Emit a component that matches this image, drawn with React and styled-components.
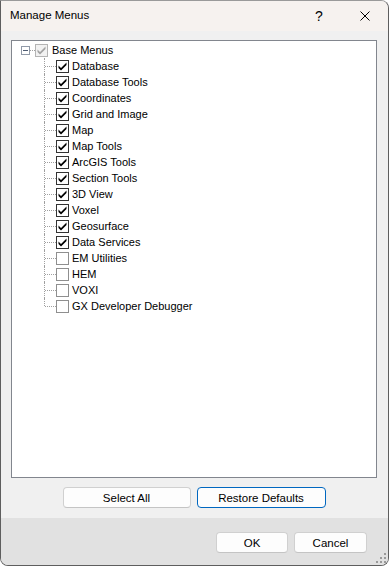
import styled, { createGlobalStyle } from "styled-components";

const Global = createGlobalStyle`
  html, body {
    margin: 0;
    padding: 0;
    background: #ffffff;
  }
  body {
    font-family: "Liberation Sans", Arial, sans-serif;
  }
`;

const Window = styled.div`
  width: 389px;
  height: 566px;
  box-sizing: border-box;
  border: 1px solid #5e5e5e;
  border-top-color: #9a9a9a;
  border-radius: 0 8px 8px 8px;
  background: #f0f0f0;
  display: flex;
  flex-direction: column;
  overflow: hidden;
  position: relative;
`;

const TitleBar = styled.div`
  height: 30px;
  background: #f6f2ef;
  display: flex;
  align-items: center;
  padding-left: 9px;
`;

const Title = styled.div`
  flex: 1;
  font-size: 11.5px;
  color: #000;
  padding-bottom: 2px;
`;

const CaptionButton = styled.div`
  width: 46px;
  height: 30px;
  display: flex;
  align-items: center;
  justify-content: center;
  font-size: 14px;
  color: #000;
`;

const Main = styled.div`
  flex: 1;
  display: flex;
  flex-direction: column;
  padding: 9px 11px 0 10px;
`;

const TreePanel = styled.div`
  height: 438px;
  box-sizing: border-box;
  border: 1px solid #82868e;
  background: #ffffff;
  padding-top: 1px;
`;

const Row = styled.div`
  height: 16px;
  display: flex;
  align-items: center;
  padding-left: ${(p) => p.$indent}px;
`;

const Expander = styled.div`
  width: 9px;
  height: 9px;
  box-sizing: border-box;
  border: 1px solid #919aa8;
  background: #fff;
  display: flex;
  align-items: center;
  justify-content: center;
  &::after {
    content: "";
    width: 5px;
    height: 1px;
    background: #4f5d73;
  }
`;

const Dash = styled.div`
  width: ${(p) => p.$w}px;
  height: 0;
  border-top: 1px dotted #a0a0a0;
`;

const Connector = styled.div`
  width: 12px;
  height: 16px;
  position: relative;
  flex-shrink: 0;
  &::before {
    content: "";
    position: absolute;
    left: 0;
    top: 0;
    height: ${(p) => (p.$last ? "8px" : "16px")};
    border-left: 1px dotted #a0a0a0;
  }
  &::after {
    content: "";
    position: absolute;
    left: 1px;
    top: 8px;
    width: 11px;
    border-top: 1px dotted #a0a0a0;
  }
`;

const Box = styled.div`
  width: 13px;
  height: 13px;
  box-sizing: border-box;
  border: 1px solid ${(p) => (p.$disabled ? "#b4b4b4" : p.$checked ? "#333333" : "#8f8f8f")};
  background: ${(p) => (p.$disabled ? "#f2f2f2" : "#ffffff")};
  display: flex;
  flex-shrink: 0;
  svg {
    display: block;
  }
`;

const Label = styled.span`
  font-size: 11px;
  color: #000;
  padding-left: ${(p) => p.$gap}px;
  white-space: nowrap;
  line-height: 16px;
`;

const ButtonRow = styled.div`
  display: flex;
  justify-content: center;
  gap: 6px;
  margin-top: 9px;
`;

const Button = styled.button`
  width: ${(p) => p.$w}px;
  height: 21px;
  box-sizing: border-box;
  border: 1px solid ${(p) => (p.$focused ? "#0067c0" : "#d0d0d0")};
  border-bottom-color: ${(p) => (p.$focused ? "#0067c0" : "#c4c4c4")};
  border-radius: 4px;
  background: #fdfdfd;
  font-family: "Liberation Sans", Arial, sans-serif;
  font-size: 11.5px;
  color: #000;
  padding: 0;
`;

const Footer = styled.div`
  height: 47px;
  margin-top: 10px;
  background: #e1e1e1;
  display: flex;
  justify-content: flex-end;
  align-items: flex-start;
  gap: 6px;
  padding: 14px 21px 0 0;
  box-sizing: border-box;
  position: relative;
`;

const Grip = styled.svg`
  position: absolute;
  right: 2px;
  bottom: 2px;
`;

const items = [
  ["Database", true],
  ["Database Tools", true],
  ["Coordinates", true],
  ["Grid and Image", true],
  ["Map", true],
  ["Map Tools", true],
  ["ArcGIS Tools", true],
  ["Section Tools", true],
  ["3D View", true],
  ["Voxel", true],
  ["Geosurface", true],
  ["Data Services", true],
  ["EM Utilities", false],
  ["HEM", false],
  ["VOXI", false],
  ["GX Developer Debugger", false],
];

const Check = ({ color }) => (
  <svg width="11" height="11" viewBox="0 0 11 11">
    <path d="M1.5 4.5 L1.5 7 L4 9.5 L9.5 4 L9.5 1.5 L4 7 Z" fill={color} />
  </svg>
);

const CheckBox = ({ checked, disabled }) => (
  <Box $checked={checked} $disabled={disabled}>
    {checked && <Check color={disabled ? "#a3a3a3" : "#000"} />}
  </Box>
);

export default function App() {
  return (
    <>
      <Global />
      <Window>
        <TitleBar>
          <Title>Manage Menus</Title>
          <CaptionButton>?</CaptionButton>
          <CaptionButton>
            <svg width="10" height="10" viewBox="0 0 10 10">
              <path d="M0.5 0.5 L9.5 9.5 M9.5 0.5 L0.5 9.5" stroke="#000" strokeWidth="1" />
            </svg>
          </CaptionButton>
        </TitleBar>
        <Main>
          <TreePanel>
            <Row $indent={9}>
              <Expander />
              <Dash $w={5} />
              <CheckBox checked disabled />
              <Label $gap={4}>Base Menus</Label>
            </Row>
            {items.map(([name, on], i) => (
              <Row key={name} $indent={32}>
                <Connector $last={i === items.length - 1} />
                <CheckBox checked={on} />
                <Label $gap={3}>{name}</Label>
              </Row>
            ))}
          </TreePanel>
          <ButtonRow>
            <Button $w={128}>Select All</Button>
            <Button $w={129} $focused>
              Restore Defaults
            </Button>
          </ButtonRow>
        </Main>
        <Footer>
          <Button $w={72}>OK</Button>
          <Button $w={73}>Cancel</Button>
          <Grip width="10" height="10" viewBox="0 0 10 10">
            <rect x="8" y="0" width="2" height="2" fill="#9a9a9a" />
            <rect x="4" y="4" width="2" height="2" fill="#9a9a9a" />
            <rect x="8" y="4" width="2" height="2" fill="#9a9a9a" />
            <rect x="0" y="8" width="2" height="2" fill="#9a9a9a" />
            <rect x="4" y="8" width="2" height="2" fill="#9a9a9a" />
            <rect x="8" y="8" width="2" height="2" fill="#9a9a9a" />
          </Grip>
        </Footer>
      </Window>
    </>
  );
}
